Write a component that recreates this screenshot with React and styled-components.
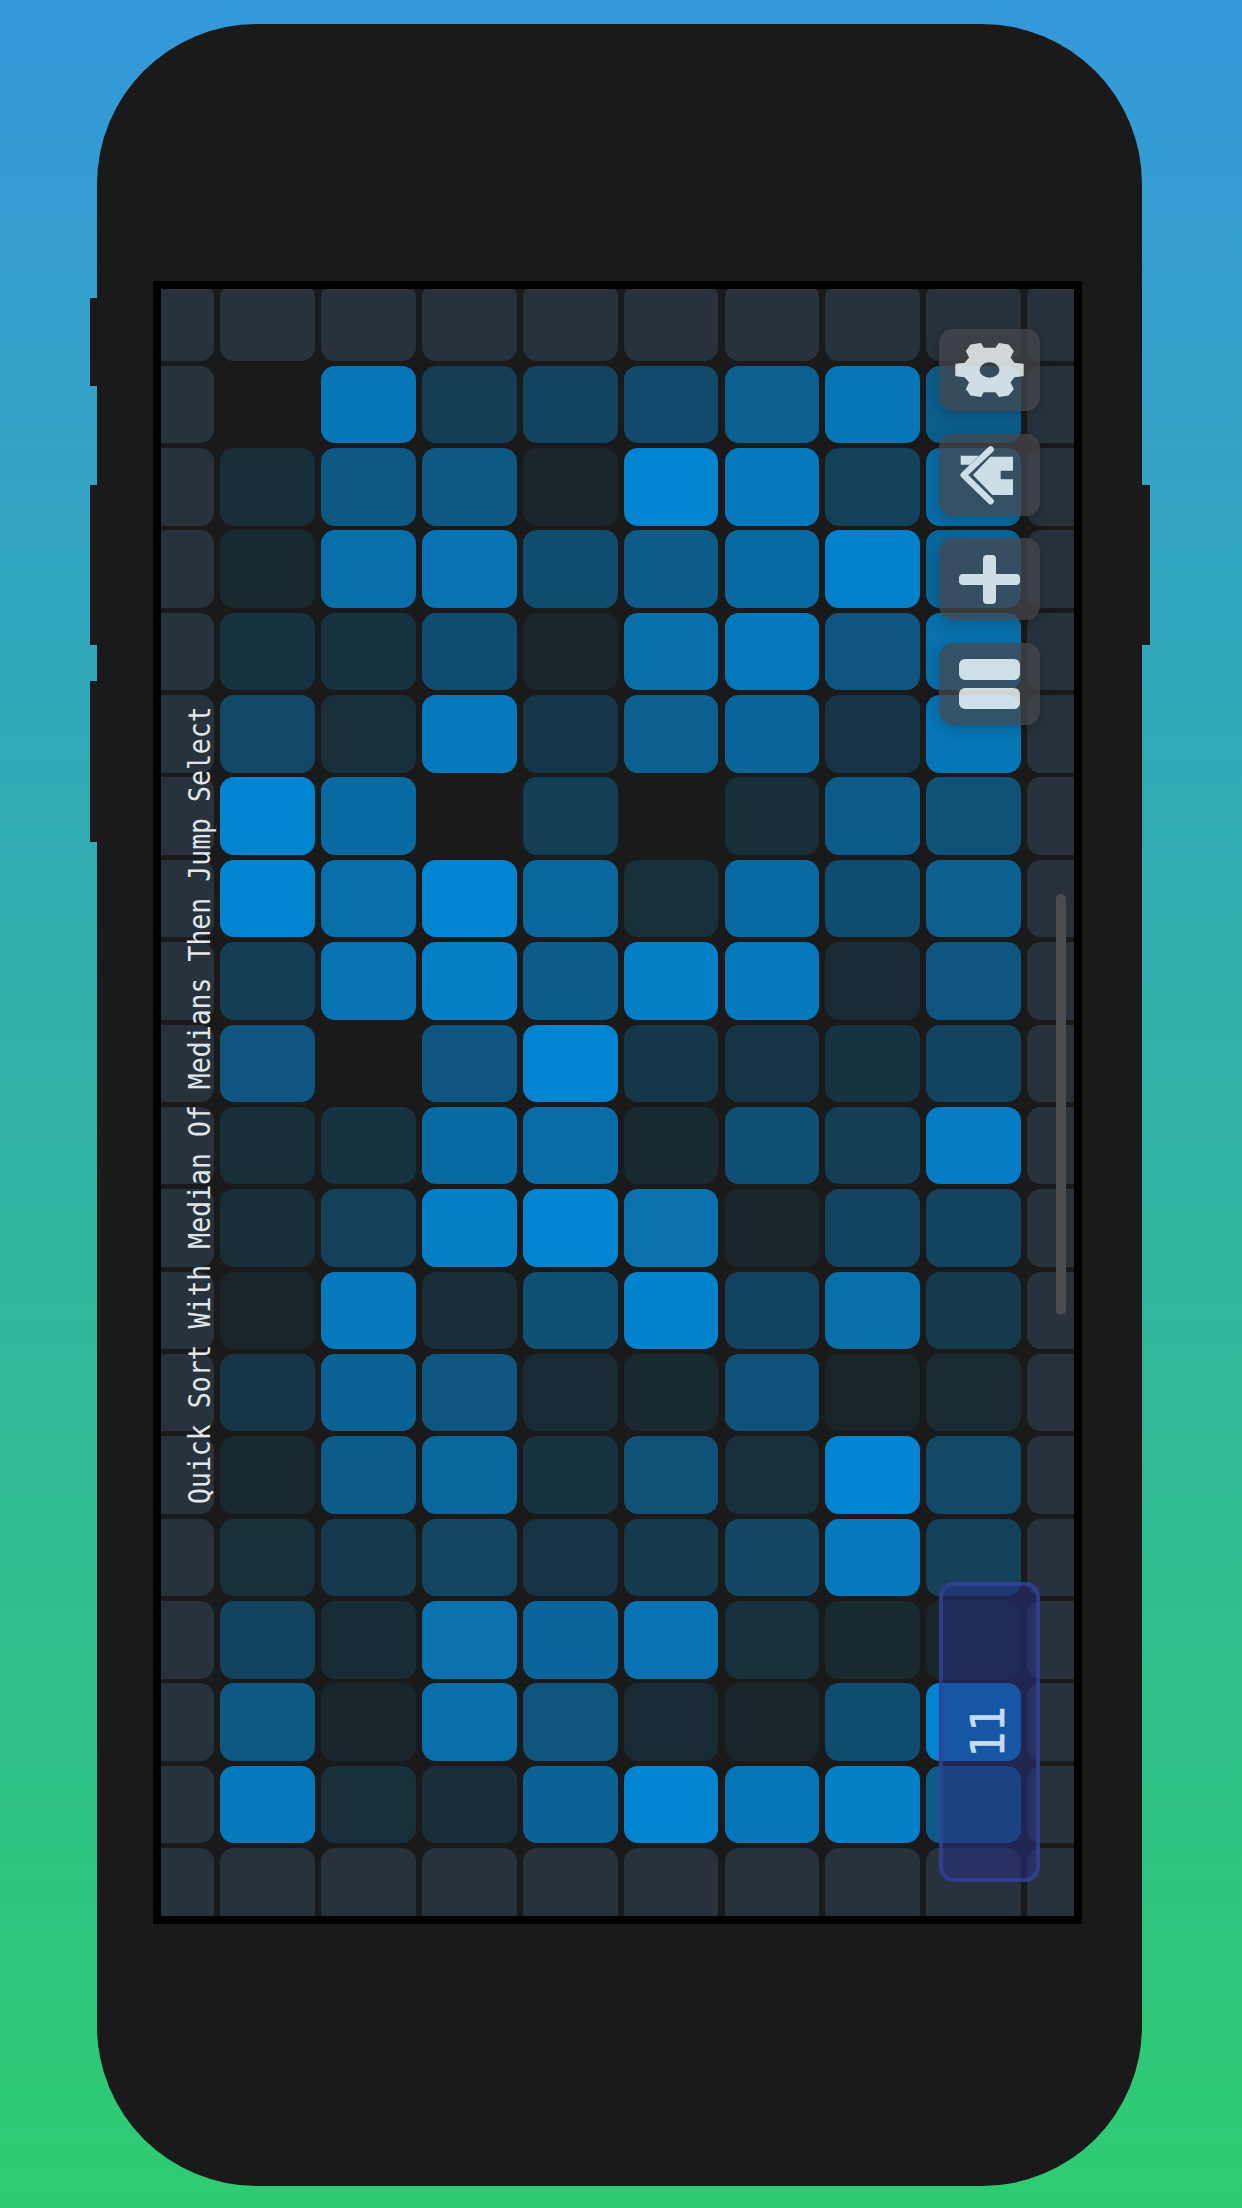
import React from "react";
import styled, { createGlobalStyle } from "styled-components";

const Global = createGlobalStyle`
  html, body { margin: 0; padding: 0; }
  body { font-family: "DejaVu Sans Mono", "Liberation Mono", monospace; }
`;

const Page = styled.div`
  width: 1242px;
  height: 2208px;
  box-sizing: border-box;
  padding: 24px 0 0 96.75px;
  display: flex;
  align-items: flex-start;
  background: linear-gradient(180deg, #3498db 0%, #2ecc71 100%);
`;

const Phone = styled.div`
  position: relative;
  width: 1045.6px;
  height: 2161.5px;
  box-sizing: border-box;
  padding: 257px 0 0 55.9px;
  border-radius: 160px;
  background: #1a1a1a;
`;

const SideKey = styled.div`
  position: absolute;
  top: ${(p) => p.$top}px;
  height: ${(p) => p.$h}px;
  width: ${(p) => (p.$right ? 8 : 7)}px;
  background: #1a1a1a;
  ${(p) => (p.$right ? "right: -8px;" : "left: -7px;")}
`;

const Screen = styled.div`
  position: relative;
  width: 929.5px;
  height: 1643px;
  box-sizing: border-box;
  border: 8px solid #000;
  overflow: hidden;
  background: #1a1a1a;
`;

const Board = styled.div`
  display: grid;
  grid-template-columns: repeat(10, 94.8px);
  grid-auto-rows: 77.5px;
  column-gap: 6.05px;
  row-gap: 4.87px;
  margin: -5.7px 0 0 -41.2px;
  width: 1003px;
`;

const mix = (t) => {
  if (t === 0) return "#1a1a1a";
  const a = [26, 36, 40];
  const b = [3, 132, 208];
  return `rgb(${a.map((v, i) => Math.round(v + (b[i] - v) * t)).join(",")})`;
};

const Cell = styled.div`
  border-radius: 14px;
  background: ${(p) => (p.$edge ? "#28323c" : mix(p.$t))};
`;

const Title = styled.div`
  position: absolute;
  left: 24px;
  top: 412px;
  height: 803px;
  writing-mode: vertical-rl;
  transform: rotate(180deg) scaleX(1.12);
  font-size: 26.5px;
  line-height: 30px;
  white-space: pre;
  color: #e2e6ea;
`;

const Tools = styled.div`
  position: absolute;
  top: 40px;
  left: 778.5px;
  display: flex;
  flex-direction: column;
  gap: 22.6px;
`;

const ToolButton = styled.div`
  width: 100.5px;
  height: 82px;
  border-radius: 14px;
  display: flex;
  align-items: center;
  justify-content: center;
  background: rgba(70, 70, 76, 0.84);
  opacity: 0.87;
  color: #ecf0f1;
  box-shadow: 0 4px 16px rgba(0, 0, 0, 0.22);
`;

const Glyph = styled.svg`
  display: block;
  fill: currentColor;
`;

const ScrollThumb = styled.div`
  position: absolute;
  left: 895px;
  top: 605px;
  width: 10.5px;
  height: 421px;
  border-radius: 5px;
  background: #4b4c4d;
`;

const ProgressBar = styled.div`
  position: absolute;
  left: 778.5px;
  top: 1292.5px;
  width: 100.5px;
  height: 300.5px;
  box-sizing: border-box;
  border: 4px solid rgba(50, 66, 160, 0.72);
  border-radius: 15px;
  background: rgba(41, 48, 130, 0.54);
`;

const ProgressValue = styled.div`
  position: absolute;
  left: 810px;
  top: 1417px;
  writing-mode: vertical-rl;
  font-size: 43px;
  line-height: 34px;
  color: #c5dcf0;
  -webkit-text-stroke: 0.5px #c5dcf0;
  transform: rotate(180deg) scaleX(1.08);
`;

const rows = [
  [0, .85, .27, .33, .4, .62, .85, .6],
  [.1, .55, .55, .02, 1, .88, .3, .75],
  [.05, .78, .82, .42, .57, .72, .97, .7],
  [.15, .15, .42, .03, .78, .88, .52, .8],
  [.38, .12, .88, .2, .62, .68, .17, .85],
  [1, .72, 0, .27, 0, .1, .57, .47],
  [1, .78, 1, .7, .12, .72, .42, .62],
  [.27, .82, .95, .57, .95, .88, .07, .52],
  [.52, 0, .52, 1, .2, .17, .15, .32],
  [.1, .15, .72, .75, .05, .45, .27, .92],
  [.1, .3, .95, 1, .8, .02, .32, .32],
  [.01, .88, .1, .45, .98, .32, .78, .22],
  [.18, .65, .52, .07, .05, .48, .01, .06],
  [.05, .57, .7, .15, .47, .12, 1, .37],
  [.12, .22, .35, .17, .22, .35, .88, .3],
  [.33, .08, .8, .68, .82, .12, .05, .03],
  [.55, .03, .78, .5, .07, .02, .42, 1],
  [.88, .12, .1, .65, 1, .85, .95, .57],
];

const edgeRow = Array(8).fill(null);
const allRows = [edgeRow, ...rows, edgeRow];

export default function App() {
  return (
    <Page>
      <Global />
      <Phone>
        <SideKey $top={274} $h={88} />
        <SideKey $top={460.6} $h={160} />
        <SideKey $top={657} $h={161} />
        <SideKey $right $top={460.6} $h={160} />
        <Screen>
          <Board>
            {allRows.map((row, r) => (
              <React.Fragment key={r}>
                <Cell $edge />
                {row.map((t, c) => (
                  <Cell key={c} $edge={t === null} $t={t} />
                ))}
                <Cell $edge />
              </React.Fragment>
            ))}
          </Board>
          <Title>Quick Sort With Median Of Medians Then Jump Select</Title>
          <ScrollThumb />
          <Tools>
            <ToolButton>
              <Glyph width="87" height="70" viewBox="0 0 262 210">
                <path
                  fillRule="evenodd"
                  stroke="currentColor"
                  strokeWidth="4"
                  strokeLinejoin="round"
                  d="M62 48L75 30L105 26L112 40H150L160 26L188 30L202 48L192 68L205 85L232 88V122L205 125L192 142L202 162L188 180L160 184L150 170H112L105 184L75 180L62 162L72 142L57 125L30 122V88L57 85L72 68ZM99 105a32 25 0 1 0 64 0a32 25 0 1 0 -64 0Z"
                />
              </Glyph>
            </ToolButton>
            <ToolButton>
              <Glyph width="80" height="70" viewBox="0 0 240 210">
                <path d="M35 47H90L62 74H35Z" />
                <path d="M72 105L124 50H192V92H155V118H192V165H130Z" />
                <path d="M125 28L44 105L125 184" fill="none" stroke="currentColor" strokeWidth="19" strokeLinecap="round" strokeLinejoin="round" />
              </Glyph>
            </ToolButton>
            <ToolButton>
              <Glyph width="61" height="49" viewBox="0 0 61 49">
                <rect x="0" y="19" width="61" height="11" rx="4" />
                <rect x="24" y="0" width="13" height="49" rx="4" />
              </Glyph>
            </ToolButton>
            <ToolButton>
              <Glyph width="61" height="50" viewBox="0 0 61 50">
                <rect x="0" y="0" width="61" height="21" rx="6" />
                <rect x="0" y="29" width="61" height="21" rx="6" />
              </Glyph>
            </ToolButton>
          </Tools>
          <ProgressBar />
          <ProgressValue>11</ProgressValue>
        </Screen>
      </Phone>
    </Page>
  );
}
